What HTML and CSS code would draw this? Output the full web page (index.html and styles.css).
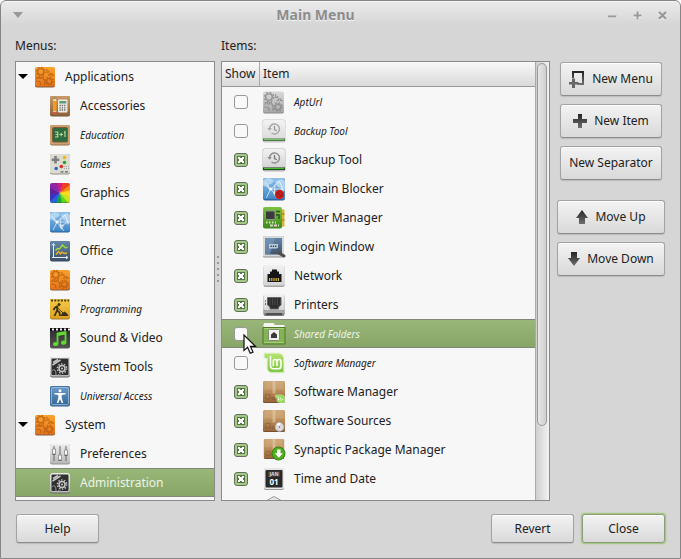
FILE: index.html
```html
<!DOCTYPE html>
<html lang="en">
<head>
<meta charset="utf-8">
<title>Main Menu</title>
<link rel="stylesheet" href="styles.css">
</head>
<body>
<svg class="defs" aria-hidden="true">
  <defs>
    <linearGradient id="g-orange" x2="0" y2="1"><stop offset="0" stop-color="#fba42c"/><stop offset="1" stop-color="#e2731b"/></linearGradient>
    <linearGradient id="g-grey" x2="0" y2="1"><stop offset="0" stop-color="#d9d9d9"/><stop offset="1" stop-color="#a9a9a9"/></linearGradient>
    <linearGradient id="g-light" x2="0" y2="1"><stop offset="0" stop-color="#eeeeee"/><stop offset="1" stop-color="#b8b8b8"/></linearGradient>
    <linearGradient id="g-pale" x2="0" y2="1"><stop offset="0" stop-color="#f2f2f2"/><stop offset="1" stop-color="#d4d4d4"/></linearGradient>
    <linearGradient id="g-wood" x2="0" y2="1"><stop offset="0" stop-color="#c79b68"/><stop offset="1" stop-color="#8f6238"/></linearGradient>
    <linearGradient id="g-box" x2="0" y2="1"><stop offset="0" stop-color="#cda577"/><stop offset=".35" stop-color="#c29663"/><stop offset="1" stop-color="#98673a"/></linearGradient>
    <linearGradient id="g-blue" x2="0" y2="1"><stop offset="0" stop-color="#8fc0ea"/><stop offset="1" stop-color="#3f86c6"/></linearGradient>
    <linearGradient id="g-steel" x2="0" y2="1"><stop offset="0" stop-color="#6585a8"/><stop offset="1" stop-color="#3d546e"/></linearGradient>
    <linearGradient id="g-access" x2="0" y2="1"><stop offset="0" stop-color="#6d9ccb"/><stop offset="1" stop-color="#356596"/></linearGradient>
    <linearGradient id="g-yellow" x2="0" y2="1"><stop offset="0" stop-color="#f8cb47"/><stop offset="1" stop-color="#dba01e"/></linearGradient>
    <linearGradient id="g-dark" x2="0" y2="1"><stop offset="0" stop-color="#2b2b2b"/><stop offset="1" stop-color="#555555"/></linearGradient>
    <linearGradient id="g-leaf" x2="0" y2="1"><stop offset="0" stop-color="#7cc142"/><stop offset="1" stop-color="#3c8a1d"/></linearGradient>
    <linearGradient id="g-mint" x2="0" y2="1"><stop offset="0" stop-color="#b4e36f"/><stop offset="1" stop-color="#7cc740"/></linearGradient>
    <linearGradient id="g-symbol" x2="0" y2="1"><stop offset="0" stop-color="#252525"/><stop offset="1" stop-color="#6e6e6e"/></linearGradient>

    <symbol id="gears" viewBox="0 0 22 22">
      <g fill="none" stroke="currentColor">
        <circle cx="6.500" cy="6" r="3.300" stroke-width="1.500"/>
        <circle cx="6.500" cy="6" r="4.700" stroke-width="1.300" stroke-dasharray="1.800 1.890"/>
        <circle cx="15.500" cy="16" r="2.800" stroke-width="1.500"/>
        <circle cx="15.500" cy="16" r="4.200" stroke-width="1.500" stroke-dasharray="1.600 1.700"/>
        <path d="M1.500 13h1.500v-1.500h2V13h2v-1.500h2V13l1.500 1.500v5.500M13 3v3.500h2V5M14 9.500h2V8h2v1.500h2.500M1.500 16h3.500l1.500 1.500v2.500" stroke-width="1.200"/>
      </g>
    </symbol>
    <symbol id="i-orange" viewBox="0 0 22 22">
      <rect x="1" y="1.500" width="20" height="20" rx="2" fill="#8a5a38"/>
      <rect x="1" y="1" width="20" height="19.500" rx="2" fill="url(#g-orange)"/>
      <use href="#gears" x="0" y="0" width="22" height="21" color="#b65c12" opacity=".75"/>
    </symbol>
    <symbol id="i-greygears" viewBox="0 0 24 24">
      <rect x="1" y="2.500" width="21" height="21" rx="2" fill="#888"/>
      <rect x="1" y="1.500" width="21" height="21" rx="2" fill="url(#g-grey)"/>
      <use href="#gears" x="0" y="1" width="23" height="22" color="#858585" opacity=".75"/>
    </symbol>
    <symbol id="i-accessories" viewBox="0 0 22 22">
      <rect x="1" y="1" width="20" height="20.500" rx="2" fill="#75583b"/>
      <rect x="1" y="1" width="20" height="19.500" rx="2" fill="url(#g-wood)"/>
      <path d="M4 6l1.700-4 1.800 4v10.500H4z" fill="#f59a1c"/><path d="M4 6l1.700-4 1.800 4z" fill="#f4dcb4"/><path d="M5 3.500L5.700 2l.8 1.500z" fill="#333"/>
      <path d="M4 16h3.500v1.200H4z" fill="#ccc"/><path d="M4 17.200h3.500v2H4z" fill="#e0524d"/>
      <rect x="9" y="4.500" width="9.500" height="13" rx="1" fill="#efece4"/>
      <rect x="10.300" y="6" width="7" height="2.500" fill="#5f9c7c"/>
      <path d="M10.500 10.500h7M10.500 12.800h7M10.500 15h7" stroke="#666" stroke-width="1.300" stroke-dasharray="1.300 1"/>
    </symbol>
    <symbol id="i-education" viewBox="0 0 22 22">
      <rect x="1" y="1" width="20" height="20.500" rx="2" fill="#94704a"/>
      <rect x="1" y="1" width="20" height="19.500" rx="2" fill="#cda071"/>
      <rect x="3.500" y="3.500" width="15" height="14.500" rx="1" fill="#2f6b40" stroke="#7e5a36"/>
      <path d="M6 8h2.800v5H6M6.500 10.500h2M10.500 10.500h3.500M12.200 8.800v3.500M15 8.500l1-.8V13" fill="none" stroke="#b9dd9c" stroke-width="1.100"/>
    </symbol>
    <symbol id="i-games" viewBox="0 0 22 22">
      <rect x="1" y="1" width="20" height="20.500" rx="2" fill="#91918a"/>
      <rect x="1" y="1" width="20" height="19.500" rx="2" fill="#dddcd1"/>
      <path d="M5.200 3h2.600v2.500h2.500v2.600H7.800v2.500H5.200V8.100H2.700V5.500h2.500z" fill="#7e7e7e"/>
      <circle cx="15.500" cy="4.500" r="1.800" fill="#f2b418"/><circle cx="15.500" cy="9.500" r="1.800" fill="#29a332"/>
      <circle cx="12.300" cy="13.500" r="1.800" fill="#dd2d22"/><circle cx="7.200" cy="15.500" r="1.800" fill="#2d67cd"/>
      <path d="M11.500 18.800h3M16 18.800h3" stroke="#666" stroke-width="1.300"/>
      <path d="M15 13.500h5M15 15.500h5" stroke="#aaa" stroke-dasharray="1 1"/>
    </symbol>
    <symbol id="i-graphics" viewBox="0 0 22 22">
      <clipPath id="c-tile"><rect x="1" y="1" width="20" height="20" rx="2"/></clipPath>
      <g clip-path="url(#c-tile)">
        <path d="M11 11L7 0h8z" fill="#ce1d7c"/><path d="M11 11L14 0h8v3z" fill="#ee3e23"/><path d="M11 11L22 2v8z" fill="#f88a18"/>
        <path d="M11 11l11-3v8z" fill="#f9d91b"/><path d="M11 11l11 4v7h-3z" fill="#c9e51d"/><path d="M11 11l9 11h-8z" fill="#61d51d"/>
        <path d="M11 11l2 11H6z" fill="#16a836"/><path d="M11 11L7 22H0v-3z" fill="#2363de"/><path d="M11 11L0 20v-9z" fill="#3934bd"/>
        <path d="M11 11L0 13V4z" fill="#5d239f"/><path d="M11 11L0 5V0h8z" fill="#9223a4"/>
        <path d="M1 20.500h20v1H1z" fill="#543" opacity=".7"/>
      </g>
    </symbol>
    <symbol id="i-internet" viewBox="0 0 22 22">
      <rect x="1" y="1" width="20" height="20.500" rx="2" fill="#2c5d92"/>
      <rect x="1" y="1" width="20" height="19.500" rx="2" fill="url(#g-blue)"/>
      <path d="M1 3l5-2 5 2-2 3-3 1 1 5-3-3-3-1zM12 4l6-2 3 2v8l-2 2-2-4-3-1zM11 13l4 1-2 5-2-2z" fill="#c3dff4" opacity=".75"/>
      <path d="M3 5l5 6 8-7M8 11l11 0M8 11L4 19M8 11l7 9M12 7l-1 9M16 4l3 7-8 5" fill="none" stroke="#fff" stroke-width=".8" opacity=".8"/>
      <circle cx="8" cy="11" r="1.400" fill="#fff"/>
    </symbol>
    <symbol id="i-office" viewBox="0 0 22 22">
      <rect x="1" y="1" width="20" height="20.500" rx="2" fill="#38485a"/>
      <rect x="1" y="1" width="20" height="19.500" rx="2" fill="url(#g-steel)"/>
      <path d="M4.500 18V4M3 5.500L4.500 3.500 6 5.500M3 17.500h15M17 16l2 1.500L17 19" fill="none" stroke="#e6edf4"/>
      <path d="M6.500 10.500l2-2 2 .5 3-4 3 3 2-1" fill="none" stroke="#a4dd32" stroke-width="1.300"/>
      <path d="M7 14.500l2.500-3 2 2.500 1.500-2 2 1.500 3-.5" fill="none" stroke="#f3b324" stroke-width="1.300"/>
    </symbol>
    <symbol id="i-programming" viewBox="0 0 22 22">
      <rect x="1" y="1" width="20" height="20.500" rx="2" fill="#a17b22"/>
      <rect x="1" y="1" width="20" height="19.500" rx="2" fill="url(#g-yellow)"/>
      <path d="M2 2.500h18" stroke="#4a3c17" stroke-width="2" stroke-dasharray="2 1.300"/>
      <circle cx="10" cy="6.500" r="1.500" fill="#3a3118"/>
      <path d="M8.500 8L6 9.500 4.500 12M8.500 8L8 12.500l2.500 2 .5 3.500M8 12.500L5.500 18" fill="none" stroke="#3a3118" stroke-width="1.700"/>
      <path d="M7 9l4.500 3.500L14 15" fill="none" stroke="#3a3118"/>
      <path d="M11.500 18l1.500-2.500 2.500-2 2.500 2 1.500 2.500z" fill="#3a3118"/>
    </symbol>
    <symbol id="i-sound" viewBox="0 0 22 22">
      <rect x="1" y="1" width="20" height="20.500" rx="2" fill="url(#g-dark)"/>
      <path d="M1 2.500h20" stroke="#111" stroke-width="3"/><path d="M3 2.500h18" stroke="#f3f3f3" stroke-width="2" stroke-dasharray="2 2"/>
      <path d="M8.500 17V6.500l8-1.500v10.500M8.500 8l8-1.500" fill="none" stroke="#5edb2e" stroke-width="1.800"/>
      <ellipse cx="6.700" cy="17" rx="2.700" ry="2.100" fill="#5edb2e"/><ellipse cx="14.700" cy="15.700" rx="2.700" ry="2.100" fill="#5edb2e"/>
    </symbol>
    <symbol id="i-system" viewBox="0 0 22 22">
      <rect x="1" y="1" width="20" height="20.500" rx="2.500" fill="#666"/>
      <rect x="1" y="1" width="20" height="19.500" rx="2.500" fill="url(#g-light)"/>
      <rect x="2.500" y="2.500" width="17" height="16.500" rx="1" fill="#303030"/>
      <g fill="none" stroke="#c4c4c4"><circle cx="13" cy="12.500" r="3" stroke-width="1.500"/><circle cx="13" cy="12.500" r="4.600" stroke-width="1.500" stroke-dasharray="1.400 1.490"/>
      <path d="M3.500 9l8-5M4 6.500l5-3" stroke-width="1.500"/><path d="M3 15c2-3 4-1 4 4M9 18.500c1 .5 2 .5 3 .5" stroke="#999"/></g>
      <circle cx="13" cy="12.500" r="1" fill="#ccc"/>
    </symbol>
    <symbol id="i-access" viewBox="0 0 22 22">
      <rect x="1" y="1" width="20" height="20.500" rx="2" fill="#35618f"/>
      <rect x="1.500" y="1.500" width="19" height="19" rx="1.500" fill="url(#g-access)" stroke="#4273a5"/>
      <rect x="2.500" y="2.500" width="17" height="17" rx="1" fill="none" stroke="#a6c7e6" stroke-width=".7"/>
      <circle cx="11" cy="5.700" r="1.500" fill="#fff"/>
      <path d="M5.500 8h11v1.300l-3.800.7v3l1.500 5h-1.500L11 14l-1.700 4H7.800l1.500-5v-3l-3.800-.7z" fill="#fff"/>
    </symbol>
    <symbol id="i-preferences" viewBox="0 0 22 22">
      <rect x="1" y="1" width="20" height="20.500" rx="2" fill="#939393"/>
      <rect x="1" y="1" width="20" height="19.500" rx="2" fill="url(#g-light)"/>
      <path d="M5 3v15M11 3v15M17 3v15" stroke="#666"/>
      <path d="M3.500 6h3v5h-3zM9.500 12h3v5h-3zM15.500 7h3v5h-3z" fill="#f6f6f6" stroke="#888" stroke-width=".8"/>
      <path d="M3.500 11.500h3M9.500 17.500h3M15.500 12.500h3" stroke="#666"/>
    </symbol>
    <symbol id="i-backup" viewBox="0 0 24 24">
      <rect x=".5" y=".5" width="23" height="23" rx="2" fill="#b6b6b6"/>
      <rect x="1" y="1" width="22" height="18.500" rx="2" fill="url(#g-pale)"/>
      <path d="M1 19.500h22v2.500H1z" fill="#224b1d"/><path d="M2 20.500h20" stroke="#49bd32"/>
      <path d="M7.500 10a5 5 0 1 1 2 4" fill="none" stroke="#8b8b8b" stroke-width="1.400"/><path d="M5.300 9h4.600l-2.400 2.800z" fill="#8b8b8b"/>
      <path d="M12.500 7v3.500l2.300 1.300" fill="none" stroke="#777" stroke-width="1.300"/>
    </symbol>
    <symbol id="i-blocker" viewBox="0 0 24 24">
      <use href="#i-internet" width="24" height="24"/>
      <circle cx="17.500" cy="17.500" r="4.700" fill="#db1e19"/><circle cx="17.500" cy="17.500" r="2.900" fill="none" stroke="#8b2020" stroke-width="1"/><path d="M15.500 15.500l4 4" stroke="#8b2020" stroke-width="1.300"/>
    </symbol>
    <symbol id="i-driver" viewBox="0 0 24 24">
      <path d="M18 3.500h4.500v17H18z" fill="#d7b537"/><path d="M18 8h4.500M18 14h4.500" stroke="#98731b"/>
      <rect x="1" y="1" width="19" height="21.500" rx="2" fill="url(#g-leaf)"/>
      <rect x="3.500" y="5" width="9.500" height="8.500" rx="1" fill="#3a3a3a" stroke="#8b9b81"/>
      <path d="M14 5.500h4M14 9h3v4" fill="none" stroke="#28551a" stroke-width="1.500"/>
      <path d="M4 16.500h10" stroke="#d8e4bb" stroke-width="2" stroke-dasharray="1.500 1.500"/><path d="M8 19.500h9" stroke="#ded3c8" stroke-width="2" stroke-dasharray="3 1"/>
    </symbol>
    <symbol id="i-login" viewBox="0 0 24 24">
      <rect x="1" y="1" width="21" height="21.500" rx="1.500" fill="#8e8e8e"/><rect x="1" y="1" width="21" height="20.500" rx="1.500" fill="#d8d8d8"/>
      <rect x="3" y="3" width="17" height="16.500" fill="url(#g-steel)"/><path d="M3 3h10L8 19.500H3z" fill="#7c9dbe" opacity=".6"/>
      <rect x="7" y="9" width="9" height="4.500" fill="#b9cde0"/><path d="M8.500 11.200h6" stroke="#333" stroke-width="1.500" stroke-dasharray="1.300 1"/>
      <path d="M15 17l7 4" stroke="#4c4c4c" stroke-width="3" stroke-linecap="round"/><path d="M11.500 17h4l1-4" fill="none" stroke="#4d5a66" stroke-width="2.200"/>
    </symbol>
    <symbol id="i-network" viewBox="0 0 24 24">
      <rect x="1.500" y="1.500" width="21" height="21.500" rx="2" fill="#a4a4a4"/><rect x="1.500" y="1" width="21" height="20.500" rx="2" fill="url(#g-pale)"/>
      <path d="M5.500 18V10H8V7.500h2V5.500h5v2h2V10h2.500v8z" fill="#161616"/>
      <path d="M7 15.500h11" stroke="#dbbc39" stroke-width="3" stroke-dasharray="1.200 1"/>
    </symbol>
    <symbol id="i-printers" viewBox="0 0 24 24">
      <rect x="1.500" y="1.500" width="21" height="21.500" rx="2" fill="#777"/><rect x="1.500" y="1" width="21" height="16.500" rx="2" fill="url(#g-pale)"/>
      <path d="M2 17.500h20l.5 3H1.500z" fill="#a6a6a6"/><path d="M4 20h16v2H4z" fill="#505050"/>
      <path d="M5.500 4.500h13.500V12l-2.500 2v2H8v-2l-2.500-2z" fill="#2d2d2d" stroke="#666"/><path d="M8 5v7M10.500 5v7M13 5v7M15.500 5v7" stroke="#484848"/>
      <path d="M3.500 7v2" stroke="#3eb94a"/><path d="M3.500 10v2" stroke="#d43a35"/>
    </symbol>
    <symbol id="i-shared" viewBox="0 0 24 24">
      <path d="M1.500 6V2l1-1h9l1.500 2h9.500v4z" fill="#f3f4ef"/><path d="M1 5.500h22V22H1z" fill="#84b351" stroke="#4f7b27"/>
      <path d="M2 6.500h20M2 20.500h20" stroke="#a8cf7b"/><rect x="6.500" y="7.500" width="11" height="11" rx="1" fill="#f1f1ee" stroke="#84897c"/>
      <path d="M9 12.500L12 10l3 2.500V16H9z" fill="#393939"/>
    </symbol>
    <symbol id="i-mint" viewBox="0 0 24 24">
      <path d="M2 2h13.500c4.200 0 6.500 2.500 6.500 6.300V22H10.500C6.500 22 5 19.700 5 16V7.500H2z" fill="#fff" stroke="#e2efd3"/>
      <path d="M2.500 2.500h13c4 0 6 2.300 6 5.800v13h-11c-3.500 0-5-2-5-5.300V7h-3z" fill="url(#g-mint)"/>
      <path d="M8.500 5.500V15c0 1.800 1 2.800 2.800 2.800h4.900c1.800 0 2.800-1 2.800-2.800v-4.200c0-3-4-3-4 0M15 14.500v-3.700c0-3-3.700-3-3.700 0v3.700" fill="none" stroke="#fff" stroke-width="1.600" stroke-linecap="round"/>
    </symbol>
    <symbol id="i-box" viewBox="0 0 24 24">
      <rect x="1" y="1.500" width="22" height="21.500" rx="1.500" fill="#755131"/><rect x="1" y="1" width="22" height="21" rx="1.500" fill="url(#g-box)"/>
      <path d="M1.500 9.500L4 1.500h16l2.500 8" fill="#d8b48a" opacity=".35"/><path d="M10.500 1h3v13l-1.500-1-1.500 1z" fill="#e3ccac" opacity=".6"/>
      <path d="M3.500 14.500h4.500v4.500H3.500zM10 17.500h3v2h-3z" fill="none" stroke="#795532" opacity=".5"/>
    </symbol>
    <symbol id="i-softman" viewBox="0 0 24 24"><use href="#i-box" width="24" height="24"/>
      <path d="M13.500 15h6c1.800 0 3 1 3 2.500V22.500h-5c-1.800 0-2.500-1-2.500-2.500v-2.500h-1.500z" fill="#94d957" stroke="#b9e593" stroke-width=".7"/><path d="M16.500 16.500V20h4v-1.500M18.500 17.500V19" fill="none" stroke="#eaffd8" stroke-width=".8"/>
    </symbol>
    <symbol id="i-sources" viewBox="0 0 24 24"><use href="#i-box" width="24" height="24"/>
      <circle cx="17.500" cy="18" r="4.400" fill="#dad9e2" stroke="#aaa" stroke-width=".7"/><path d="M17.500 18l-3-3a4.300 4.300 0 0 1 4-1z" fill="#fff"/><circle cx="17.500" cy="18" r="1.400" fill="#a57a4d" stroke="#fff" stroke-width=".7"/>
    </symbol>
    <symbol id="i-synaptic" viewBox="0 0 24 24"><use href="#i-box" x="1" width="22" height="22"/>
      <circle cx="16.500" cy="15.500" r="6.500" fill="#51ad20" stroke="#33830d"/><path d="M15 11.500h3.500v3.700h2.300l-4 4.500-4-4.500H15z" fill="#fff"/>
    </symbol>
    <symbol id="i-time" viewBox="0 0 24 24">
      <rect x="2" y="1.500" width="20" height="21.500" rx="2" fill="#999"/><rect x="2" y="1" width="20" height="21" rx="2" fill="#e6e6e6"/>
      <rect x="3.500" y="3" width="17" height="17.500" rx="1" fill="#292929"/><rect x="6" y="4.500" width="12" height="5" fill="#444"/>
      <text x="12" y="9" class="ico-month">JAN</text><text x="12" y="17.500" class="ico-day">01</text>
    </symbol>
  </defs>
</svg>

<main class="window">
  <header class="titlebar">
    <button class="wm wm-menu" aria-label="Window menu"><svg width="10" height="6" viewBox="0 0 10 6"><path d="M0 0h10L5 6z" fill="#999"/></svg></button>
    <h1>Main Menu</h1>
    <div class="wm-group">
      <button class="wm" aria-label="Minimize"><svg width="9" height="9" viewBox="0 0 9 9"><path d="M0 6h9" stroke="#fff" stroke-width="2"/><path d="M0 5.500h8.500" stroke="#999" stroke-width="2"/></svg></button>
      <button class="wm" aria-label="Maximize"><svg width="9" height="9" viewBox="0 0 9 9"><path d="M.5 5.500h8M4.500 1.500V9" stroke="#fff" stroke-width="2"/><path d="M.5 4.500h8M4.500.5v8" stroke="#999" stroke-width="2"/></svg></button>
      <button class="wm" aria-label="Close window"><svg width="9" height="9" viewBox="0 0 9 9"><path d="M1 2l7 7M8 2L1 9" stroke="#fff" stroke-width="2"/><path d="M1 1l7 7M8 1L1 8" stroke="#999" stroke-width="2.400"/></svg></button>
    </div>
  </header>

  <div class="content">
    <section class="pane menus">
      <h2 id="menus-label">Menus:</h2>
      <ul class="frame tree" role="tree" aria-labelledby="menus-label">
        <li class="row" role="treeitem" aria-expanded="true"><svg class="arrow" viewBox="0 0 10 5"><path d="M0 0h10L5 5z"/></svg><svg class="icon"><use href="#i-orange"/></svg>Applications</li>
        <li class="row child" role="treeitem"><svg class="icon"><use href="#i-accessories"/></svg>Accessories</li>
        <li class="row child hidden-item" role="treeitem"><svg class="icon"><use href="#i-education"/></svg>Education</li>
        <li class="row child hidden-item" role="treeitem"><svg class="icon"><use href="#i-games"/></svg>Games</li>
        <li class="row child" role="treeitem"><svg class="icon"><use href="#i-graphics"/></svg>Graphics</li>
        <li class="row child" role="treeitem"><svg class="icon"><use href="#i-internet"/></svg>Internet</li>
        <li class="row child" role="treeitem"><svg class="icon"><use href="#i-office"/></svg>Office</li>
        <li class="row child hidden-item" role="treeitem"><svg class="icon"><use href="#i-orange"/></svg>Other</li>
        <li class="row child hidden-item" role="treeitem"><svg class="icon"><use href="#i-programming"/></svg>Programming</li>
        <li class="row child" role="treeitem"><svg class="icon"><use href="#i-sound"/></svg>Sound &amp; Video</li>
        <li class="row child" role="treeitem"><svg class="icon"><use href="#i-system"/></svg>System Tools</li>
        <li class="row child hidden-item" role="treeitem"><svg class="icon"><use href="#i-access"/></svg>Universal Access</li>
        <li class="row" role="treeitem" aria-expanded="true"><svg class="arrow" viewBox="0 0 10 5"><path d="M0 0h10L5 5z"/></svg><svg class="icon"><use href="#i-orange"/></svg>System</li>
        <li class="row child" role="treeitem"><svg class="icon"><use href="#i-preferences"/></svg>Preferences</li>
        <li class="row child selected" role="treeitem" aria-selected="true"><svg class="icon"><use href="#i-system"/></svg>Administration</li>
      </ul>
    </section>

    <div class="splitter" role="separator"><i></i><i></i><i></i><i></i><i></i></div>

    <section class="pane items">
      <h2 id="items-label">Items:</h2>
      <div class="frame list">
        <div class="viewport">
          <table aria-labelledby="items-label">
            <thead><tr><th class="show">Show</th><th>Item</th></tr></thead>
            <tbody>
              <tr class="hidden-item"><td><input type="checkbox" id="s1"></td><td><label for="s1"><svg class="icon"><use href="#i-greygears"/></svg>AptUrl</label></td></tr>
              <tr class="hidden-item"><td><input type="checkbox" id="s2"></td><td><label for="s2"><svg class="icon faded"><use href="#i-backup"/></svg>Backup Tool</label></td></tr>
              <tr><td><input type="checkbox" id="s3" checked></td><td><label for="s3"><svg class="icon"><use href="#i-backup"/></svg>Backup Tool</label></td></tr>
              <tr><td><input type="checkbox" id="s4" checked></td><td><label for="s4"><svg class="icon"><use href="#i-blocker"/></svg>Domain Blocker</label></td></tr>
              <tr><td><input type="checkbox" id="s5" checked></td><td><label for="s5"><svg class="icon"><use href="#i-driver"/></svg>Driver Manager</label></td></tr>
              <tr><td><input type="checkbox" id="s6" checked></td><td><label for="s6"><svg class="icon"><use href="#i-login"/></svg>Login Window</label></td></tr>
              <tr><td><input type="checkbox" id="s7" checked></td><td><label for="s7"><svg class="icon"><use href="#i-network"/></svg>Network</label></td></tr>
              <tr><td><input type="checkbox" id="s8" checked></td><td><label for="s8"><svg class="icon"><use href="#i-printers"/></svg>Printers</label></td></tr>
              <tr class="hidden-item selected"><td><span class="pointed"><input type="checkbox" id="s9"><svg class="pointer" viewBox="0 0 14 21" aria-hidden="true"><path d="M1 1v15.500l3.600-3.200 2.600 6 2.800-1.200-2.600-5.800h5z" fill="#fff" stroke="#111" stroke-width="1.200"/></svg></span></td><td><label for="s9"><svg class="icon"><use href="#i-shared"/></svg>Shared Folders</label></td></tr>
              <tr class="hidden-item"><td><input type="checkbox" id="s10"></td><td><label for="s10"><svg class="icon"><use href="#i-mint"/></svg>Software Manager</label></td></tr>
              <tr><td><input type="checkbox" id="s11" checked></td><td><label for="s11"><svg class="icon"><use href="#i-softman"/></svg>Software Manager</label></td></tr>
              <tr><td><input type="checkbox" id="s12" checked></td><td><label for="s12"><svg class="icon"><use href="#i-sources"/></svg>Software Sources</label></td></tr>
              <tr><td><input type="checkbox" id="s13" checked></td><td><label for="s13"><svg class="icon"><use href="#i-synaptic"/></svg>Synaptic Package Manager</label></td></tr>
              <tr><td><input type="checkbox" id="s14" checked></td><td><label for="s14"><svg class="icon"><use href="#i-time"/></svg>Time and Date</label></td></tr>
              <tr><td></td><td><svg class="icon" viewBox="0 0 24 24"><path d="M2 6l10-5.500L22 6v12l-10 5-10-5z" fill="#e6e6e6" stroke="#999"/></svg></td></tr>
            </tbody>
          </table>
        </div>
        <div class="scrollbar"><div class="thumb"></div></div>
      </div>
    </section>

    <aside class="actions">
      <div class="group narrow">
        <button class="btn"><svg width="16" height="18" viewBox="0 0 16 18"><path d="M4 8V2h10v12H8.500" fill="none" stroke="url(#g-symbol)" stroke-width="2"/><path d="M3 8.500h3V12h3.500v2.500H6V18H3v-3.500H0V12h3z" fill="#666"/></svg>New Menu</button>
        <button class="btn"><svg width="14" height="14" viewBox="0 0 14 14"><path d="M5 0h4v5h5v4H9v5H5V9H0V5h5z" fill="url(#g-symbol)"/></svg>New Item</button>
        <button class="btn">New Separator</button>
      </div>
      <div class="group">
        <button class="btn"><svg width="12" height="14" viewBox="0 0 12 14"><path d="M6 0l6 8H9v6H3V8H0z" fill="url(#g-symbol)"/></svg>Move Up</button>
        <button class="btn"><svg width="12" height="14" viewBox="0 0 12 14"><path d="M6 14l6-8H9V0H3v6H0z" fill="url(#g-symbol)"/></svg>Move Down</button>
      </div>
    </aside>
  </div>

  <footer class="footer">
    <button class="btn">Help</button>
    <span class="spacer"></span>
    <button class="btn">Revert</button>
    <button class="btn default">Close</button>
  </footer>
</main>
</body>
</html>
```
FILE: styles.css
```css
* { box-sizing: border-box; }

body {
  margin: 0;
  background: #fff;
  color: #212121;
  font: 12px/20px "Noto Sans", sans-serif;
}

h1, h2, ul { margin: 0; padding: 0; }
button { font: inherit; color: inherit; }
svg { flex: none; }

.defs { position: absolute; width: 0; height: 0; }
.ico-month { font: bold 5px "Noto Sans", sans-serif; fill: #ddd; text-anchor: middle; }
.ico-day { font: bold 8px "Noto Sans", sans-serif; fill: #fff; text-anchor: middle; }

.window {
  display: flex;
  flex-direction: column;
  height: 100vh;
  border: 1px solid #858585;
  border-radius: 6px 6px 0 0;
  background: linear-gradient(#ebebeb, #d6d6d6 24px);
  box-shadow: inset 0 1px #f6f6f6;
}

/* Title bar */
.titlebar {
  display: flex;
  align-items: center;
  height: 28px;
  padding: 0 13px 0 12px;
}
.titlebar h1 {
  flex: 1;
  text-align: center;
  font-size: 14px;
  color: #8c8c8c;
  text-shadow: 0 1px #f4f4f4;
}
.wm { display: flex; padding: 0; border: 0; background: none; }
.wm-group { display: flex; gap: 16px; }

/* Panes */
.content {
  display: flex;
  flex: 1;
  min-height: 0;
  padding: 7px 15px 0 14px;
}
.pane { display: flex; flex-direction: column; }
.menus { flex: 200; }
.items { flex: 329; }
.pane h2 { font-size: 12px; font-weight: normal; line-height: 20px; padding-bottom: 5px; }
.frame {
  flex: 1;
  min-height: 0;
  overflow: hidden;
  border: 1px solid #8a8a8a;
  background: #f7f7f7;
}

.row {
  display: flex;
  align-items: center;
  gap: 9px;
  height: 29px;
  padding-left: 2px;
  list-style: none;
  white-space: nowrap;
}
.row .icon { width: 22px; height: 22px; }
.row.child { padding-left: 33px; }
.arrow { width: 10px; height: 5px; margin-right: -3px; }
.hidden-item { font-size: 10px; font-style: italic; }
.selected {
  background: linear-gradient(#98b779, #86a567);
  box-shadow: inset 0 1px #81887a, inset 0 -1px #81887a;
  color: #eef4e8;
}

.splitter {
  display: flex;
  flex-direction: column;
  align-items: center;
  justify-content: center;
  gap: 4px;
  width: 6px;
}
.splitter i { width: 2px; height: 2px; background: #999; }

/* Item list */
.list { display: flex; }
.viewport { flex: 1; overflow: hidden; }
table { width: 100%; border-collapse: separate; border-spacing: 0; table-layout: fixed; }
th {
  height: 25px;
  padding: 0 3px;
  border-bottom: 1px solid #999;
  background: linear-gradient(#f9f9f9, #d9d9d9);
  font-weight: normal;
  text-align: left;
}
th.show { width: 38px; border-right: 1px solid #aaa; }
td { height: 29px; padding: 0; }
td:first-child { padding-left: 12px; }
td:last-child { padding-left: 2px; }
td label { display: flex; align-items: center; gap: 8px; white-space: nowrap; }
td .icon { display: block; width: 24px; height: 24px; }
.faded { opacity: .75; }

input[type="checkbox"] {
  appearance: none;
  display: block;
  width: 14px;
  height: 14px;
  margin: 0;
  border: 1px solid #999;
  border-radius: 3px;
  background: #f9f9f9;
}
input[type="checkbox"]:checked {
  border-color: #62705a;
  background:
    linear-gradient(#fff, #fff) center / 4px 4px no-repeat,
    linear-gradient(#59764a, #59764a) center / 2px 8px no-repeat,
    linear-gradient(#59764a, #59764a) center / 8px 2px no-repeat,
    linear-gradient(#fff, #fff) center / 6px 6px no-repeat,
    linear-gradient(#59764a, #59764a) center / 8px 8px no-repeat,
    #a5c886;
}
.pointed { display: block; position: relative; }
.pointer { position: absolute; left: 9px; top: 7px; width: 14px; height: 21px; }

.scrollbar {
  width: 14px;
  padding: 1px 2px 0 1px;
  border-left: 1px solid #aaa;
  background: linear-gradient(90deg, #cfcfcf, #f2f2f2);
}
.thumb {
  height: 83%;
  border: 1px solid #999;
  border-radius: 5px;
  background: linear-gradient(90deg, #e6e6e6, #cfcfcf);
}

/* Buttons */
.btn {
  display: flex;
  align-items: center;
  justify-content: center;
  gap: 7px;
  height: 34px;
  padding: 0 7px;
  border: 1px solid #a3a3a3;
  border-bottom-color: #8c8c8c;
  border-radius: 3px;
  background: linear-gradient(#f3f3f3, #d9d9d9);
  box-shadow: inset 0 1px #fff, 0 1px 1px #bbb;
  white-space: nowrap;
}
.actions {
  display: flex;
  flex-direction: column;
  gap: 20px;
  width: 108px;
  margin-left: 7px;
  padding-top: 26px;
}
.group { display: flex; flex-direction: column; gap: 8px; }
.narrow { padding: 0 3px; }

.footer {
  display: flex;
  gap: 8px;
  padding: 13px 15px 15px;
}
.footer .btn { width: 83px; height: 29px; }
.spacer { flex: 1; }
.footer .default { border-color: #8b9a7d; box-shadow: inset 0 1px #fff, 0 0 0 1px #a5c983, 0 0 2px 1px #a5c983; }
```
